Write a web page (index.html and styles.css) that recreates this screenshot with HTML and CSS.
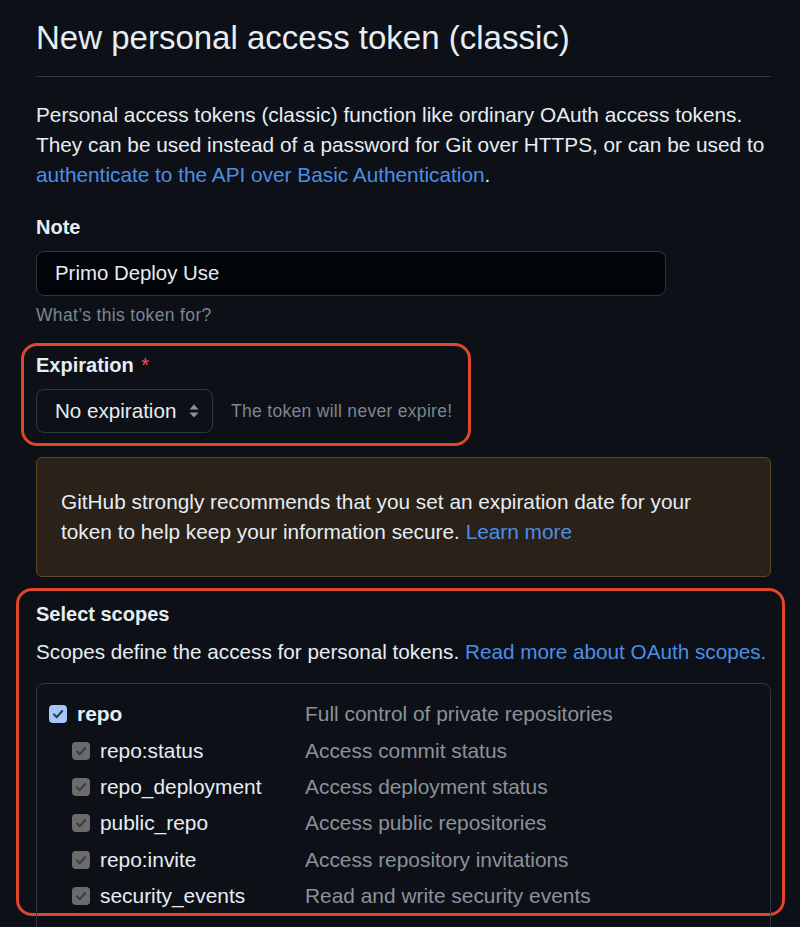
FILE: index.html
```html
<!DOCTYPE html>
<html>
<head>
<meta charset="utf-8">
<link rel="stylesheet" href="styles.css">
</head>
<body>
<div class="page">
  <h1 class="title">New personal access token (classic)</h1>
  <p class="intro">Personal access tokens (classic) function like ordinary OAuth access tokens. They can be used instead of a password for Git over HTTPS, or can be used to <a href="#">authenticate to the API over Basic Authentication</a>.</p>

  <div class="field">
    <label class="label">Note</label>
    <div class="input">Primo Deploy Use</div>
    <div class="help">What’s this token for?</div>
  </div>

  <div class="mark mark-exp">
    <div class="label">Expiration <span class="req">*</span></div>
    <div class="exp-row">
      <div class="select"><span>No expiration</span>
        <svg class="caret" width="12" height="16" viewBox="0 0 12 16"><path d="M6 1.5 L10.5 6.5 H1.5 Z M6 14.5 L10.5 9.5 H1.5 Z" fill="#8b929b"/></svg>
      </div>
      <span class="exp-note">The token will never expire!</span>
    </div>
  </div>

  <div class="warn">GitHub strongly recommends that you set an expiration date for your token to help keep your information secure. <a href="#">Learn more</a></div>

  <div class="mark mark-scopes">
    <div class="label">Select scopes</div>
    <p class="scopes-desc">Scopes define the access for personal tokens. <a href="#">Read more about OAuth scopes.</a></p>
    <div class="scopes">
      <div class="group">
        <div class="row parent">
          <span class="cb cb-on"><svg width="12" height="12" viewBox="0 0 12 12"><path d="M2 6.4 L4.8 9.2 L10.2 3" fill="none" stroke="#2b3440" stroke-width="2" stroke-linecap="round" stroke-linejoin="round"/></svg></span>
          <span class="name">repo</span>
          <span class="desc">Full control of private repositories</span>
        </div>
        <div class="row child">
          <span class="cb cb-dis"><svg width="12" height="12" viewBox="0 0 12 12"><path d="M2 6.4 L4.8 9.2 L10.2 3" fill="none" stroke="#3c3c3c" stroke-width="2" stroke-linecap="round" stroke-linejoin="round"/></svg></span>
          <span class="name">repo:status</span>
          <span class="desc">Access commit status</span>
        </div>
        <div class="row child">
          <span class="cb cb-dis"><svg width="12" height="12" viewBox="0 0 12 12"><path d="M2 6.4 L4.8 9.2 L10.2 3" fill="none" stroke="#3c3c3c" stroke-width="2" stroke-linecap="round" stroke-linejoin="round"/></svg></span>
          <span class="name">repo_deployment</span>
          <span class="desc">Access deployment status</span>
        </div>
        <div class="row child">
          <span class="cb cb-dis"><svg width="12" height="12" viewBox="0 0 12 12"><path d="M2 6.4 L4.8 9.2 L10.2 3" fill="none" stroke="#3c3c3c" stroke-width="2" stroke-linecap="round" stroke-linejoin="round"/></svg></span>
          <span class="name">public_repo</span>
          <span class="desc">Access public repositories</span>
        </div>
        <div class="row child">
          <span class="cb cb-dis"><svg width="12" height="12" viewBox="0 0 12 12"><path d="M2 6.4 L4.8 9.2 L10.2 3" fill="none" stroke="#3c3c3c" stroke-width="2" stroke-linecap="round" stroke-linejoin="round"/></svg></span>
          <span class="name">repo:invite</span>
          <span class="desc">Access repository invitations</span>
        </div>
        <div class="row child">
          <span class="cb cb-dis"><svg width="12" height="12" viewBox="0 0 12 12"><path d="M2 6.4 L4.8 9.2 L10.2 3" fill="none" stroke="#3c3c3c" stroke-width="2" stroke-linecap="round" stroke-linejoin="round"/></svg></span>
          <span class="name">security_events</span>
          <span class="desc">Read and write security events</span>
        </div>
      </div>
      <div class="group group-empty"></div>
    </div>
  </div>
</div>
</body>
</html>
```

FILE: styles.css
```css
html, body {
  margin: 0;
  padding: 0;
  background: #0d1117;
  color: #e6edf3;
  font-family: "Liberation Sans", Arial, sans-serif;
  overflow: hidden;
}
a { color: #4c8ee6; text-decoration: none; }

.page {
  padding: 18px 29px 0 36px;
  height: 909px;
  overflow: hidden;
}

.title {
  margin: 0;
  font-size: 33px;
  font-weight: 400;
  line-height: 40px;
  padding-bottom: 18px;
  border-bottom: 1px solid #30363d;
}

.intro {
  margin: 23px 0 0;
  font-size: 20.8px;
  line-height: 30px;
}

.field { margin-top: 24px; }

.label {
  display: block;
  font-size: 20px;
  font-weight: 700;
  line-height: 26px;
}
.req { color: #f85149; font-weight: 400; margin-left: 2px; }

.input {
  margin-top: 11px;
  width: 610px;
  height: 43px;
  border: 1px solid #30363d;
  border-radius: 8px;
  background: #010409;
  font-size: 20.4px;
  line-height: 43px;
  padding-left: 18px;
}

.help {
  margin-top: 7px;
  font-size: 17.5px;
  letter-spacing: 0.35px;
  line-height: 24px;
  color: #7d8590;
}

.mark {
  border: 3px solid #e0462a;
  border-radius: 16px;
}
.mark-exp {
  margin: 16px 0 0 -15px;
  width: fit-content;
  padding: 6px 16px 10px 12px;
}
.exp-row {
  margin-top: 11px;
  display: flex;
  align-items: center;
  gap: 18px;
}
.select {
  display: flex;
  align-items: center;
  justify-content: space-between;
  width: 145px;
  height: 42px;
  padding: 0 12px 0 18px;
  border: 1px solid #30363d;
  border-radius: 8px;
  background: #0d1117;
  font-size: 20.6px;
}
.exp-note {
  font-size: 17.5px;
  letter-spacing: 0.3px;
  color: #7d8590;
}

.warn {
  margin-top: 11px;
  border: 1px solid #5b4a26;
  border-radius: 6px;
  background: #2a2119;
  padding: 29px 24px 29px 24px;
  font-size: 20.8px;
  line-height: 30px;
}

.mark-scopes {
  margin: 11px -14px 0 -20px;
  padding: 10px 11px 0 17px;
  height: 312px;
}
.scopes-desc {
  margin: 10px 0 0;
  font-size: 20.7px;
  line-height: 30px;
  white-space: nowrap;
}
.scopes {
  margin-top: 16px;
  border: 1px solid #30363d;
  border-radius: 8px;
}
.group {
  padding: 12px 0 14px 12px;
  border-bottom: 1px solid #30363d;
}
.group-empty { height: 40px; padding: 0; }
.row {
  display: flex;
  align-items: center;
  height: 36.4px;
  font-size: 20.9px;
}
.cb {
  width: 18px;
  height: 18px;
  border-radius: 4px;
  display: flex;
  align-items: center;
  justify-content: center;
  flex: none;
}
.cb-on { background: #a4c7f7; }
.cb-dis { background: #6b6b6b; }
.name { margin-left: 10px; }
.parent .name { font-weight: 700; width: 228px; }
.child { padding-left: 23px; }
.child .name { width: 205px; }
.desc { color: #8b929b; }
```
